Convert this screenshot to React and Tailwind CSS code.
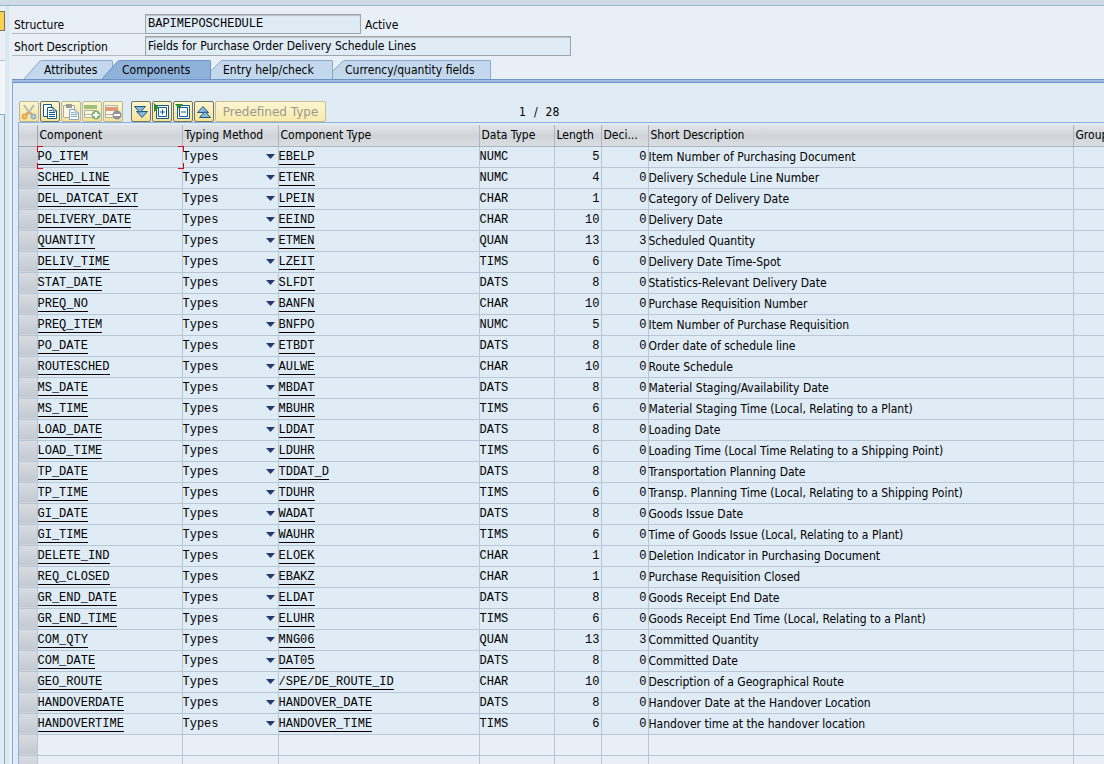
import React from 'react';

const ROWS = `PO_ITEM|EBELP|NUMC|5|0|Item Number of Purchasing Document
SCHED_LINE|ETENR|NUMC|4|0|Delivery Schedule Line Number
DEL_DATCAT_EXT|LPEIN|CHAR|1|0|Category of Delivery Date
DELIVERY_DATE|EEIND|CHAR|10|0|Delivery Date
QUANTITY|ETMEN|QUAN|13|3|Scheduled Quantity
DELIV_TIME|LZEIT|TIMS|6|0|Delivery Date Time-Spot
STAT_DATE|SLFDT|DATS|8|0|Statistics-Relevant Delivery Date
PREQ_NO|BANFN|CHAR|10|0|Purchase Requisition Number
PREQ_ITEM|BNFPO|NUMC|5|0|Item Number of Purchase Requisition
PO_DATE|ETBDT|DATS|8|0|Order date of schedule line
ROUTESCHED|AULWE|CHAR|10|0|Route Schedule
MS_DATE|MBDAT|DATS|8|0|Material Staging/Availability Date
MS_TIME|MBUHR|TIMS|6|0|Material Staging Time (Local, Relating to a Plant)
LOAD_DATE|LDDAT|DATS|8|0|Loading Date
LOAD_TIME|LDUHR|TIMS|6|0|Loading Time (Local Time Relating to a Shipping Point)
TP_DATE|TDDAT_D|DATS|8|0|Transportation Planning Date
TP_TIME|TDUHR|TIMS|6|0|Transp. Planning Time (Local, Relating to a Shipping Point)
GI_DATE|WADAT|DATS|8|0|Goods Issue Date
GI_TIME|WAUHR|TIMS|6|0|Time of Goods Issue (Local, Relating to a Plant)
DELETE_IND|ELOEK|CHAR|1|0|Deletion Indicator in Purchasing Document
REQ_CLOSED|EBAKZ|CHAR|1|0|Purchase Requisition Closed
GR_END_DATE|ELDAT|DATS|8|0|Goods Receipt End Date
GR_END_TIME|ELUHR|TIMS|6|0|Goods Receipt End Time (Local, Relating to a Plant)
COM_QTY|MNG06|QUAN|13|3|Committed Quantity
COM_DATE|DAT05|DATS|8|0|Committed Date
GEO_ROUTE|/SPE/DE_ROUTE_ID|CHAR|10|0|Description of a Geographical Route
HANDOVERDATE|HANDOVER_DATE|DATS|8|0|Handover Date at the Handover Location
HANDOVERTIME|HANDOVER_TIME|TIMS|6|0|Handover time at the handover location`
  .split('\n')
  .map((line) => line.split('|'));

const MONO = "font-['Liberation_Mono',monospace]";
const HEADERS = ['Component', 'Typing Method', 'Component Type', 'Data Type', 'Length', 'Deci...', 'Short Description', 'Group'];

function Tab({ label, active, first, width }) {
  const fill = active ? '#8fb2da' : '#c3d8ec';
  const edge = active ? '#6a94c4' : '#8aa9c8';
  const wide = first || active;
  return (
    <button type="button" role="tab" aria-selected={!!active} className={`relative flex h-[19px] items-center whitespace-nowrap ${wide ? 'pl-5' : 'pl-3'} ${width} ${active ? 'z-10' : ''}`}>
      <span className="absolute inset-0 flex" aria-hidden="true">
        <svg width="18" height="19" viewBox="0 0 18 19" className="shrink-0">
          {wide ? (
            <>
              <path d="M0 19L15 2Q16 .5 18 .5V19Z" fill={fill} />
              <path d="M0 19L15 2Q16 .5 18 .5" fill="none" stroke={edge} />
            </>
          ) : (
            <>
              <path d="M0 19V11L9 2Q10 .5 12 .5H18V19Z" fill={fill} />
              <path d="M0 11L9 2Q10 .5 12 .5H18" fill="none" stroke={edge} />
            </>
          )}
        </svg>
        <span className={`grow rounded-tr-[2px] border-t border-r ${active ? 'border-[#6a94c4] bg-[#8fb2da]' : 'border-[#8aa9c8] bg-[#c3d8ec]'}`} />
      </span>
      <span className="relative">{label}</span>
    </button>
  );
}

function ToolButton({ label, dim, children }) {
  return (
    <button type="button" aria-label={label} disabled={dim} className={`flex h-[21px] w-5 items-center justify-center rounded-[2px] border bg-linear-to-b from-[#fdf6cf] to-[#f7e395] ${dim ? 'border-[#b9b59a]' : 'border-[#77735c]'}`}>
      <svg width="18" height="18" viewBox="0 0 18 18" fill="none">{children}</svg>
    </button>
  );
}

const Arrow = () => (
  <svg width="9" height="5" viewBox="0 0 9 5" aria-hidden="true"><path d="M0 0H9L4.5 5Z" fill="#25396f" /></svg>
);

export default function App() {
  return (
    <div className="flex h-screen flex-col overflow-hidden bg-[#e8eff7] font-['DejaVu_Sans_Condensed','Noto_Sans',sans-serif] text-[12px] leading-4 text-black">
      <div className="h-[6px] shrink-0 border-b border-[#9fb5cc] bg-[#cfdce8]" />
      <div className="flex min-h-0 grow">
        <div className="flex w-[9px] shrink-0 border-r-4 border-[#dce7ef]">
          <div className="flex w-[5px] flex-col">
            <div className="mt-[5px] h-5 border border-l-0 border-[#77735c] bg-[#fbd04e]" />
            <div className="mt-[29px] h-[54px] border-t border-[#b4c4d4] bg-[#f2f6fb]" />
            <div className="grow border-t border-r border-[#8fa9c4] bg-[#dfebf5]" />
          </div>
        </div>
        <main className="flex min-w-0 grow flex-col pl-[3px]">
          <div className="mt-2 flex h-5 items-center">
            <label htmlFor="structure" className="h-5 w-[133px] border-b border-[#b3b8bd] pt-[3px] pl-0.5">Structure</label>
            <input id="structure" readOnly value="BAPIMEPOSCHEDULE" className={`h-5 w-[216px] border border-[#a0a5aa] bg-[#dfebf5] px-0.5 inset-shadow-[0_1px_1px_#b8c0c8] ${MONO}`} />
            <span className="pt-0.5 pl-1">Active</span>
          </div>
          <div className="mt-0.5 flex h-5 items-center">
            <label htmlFor="description" className="h-5 w-[133px] border-b border-[#b3b8bd] pt-[3px] pl-0.5">Short Description</label>
            <input id="description" readOnly value="Fields for Purchase Order Delivery Schedule Lines" className="h-5 w-[426px] border border-[#a0a5aa] bg-[#dfebf5] px-0.5 inset-shadow-[0_1px_1px_#b8c0c8]" />
          </div>
          <div role="tablist" className="mt-1 flex pl-3">
            <Tab label="Attributes" first width="w-[89px]" />
            <Tab label="Components" active width="-ml-[11px] w-[109px]" />
            <Tab label="Entry help/check" width="w-[122px]" />
            <Tab label="Currency/quantity fields" width="w-[158px]" />
          </div>
          <div className="h-1 shrink-0 border-y border-[#6a94c4] bg-[#9dbde0]" />
          <section className="flex min-h-0 grow flex-col border-l border-[#86a9d0] bg-[#dfebf5] pl-[5px]">
            <div className="mt-[18px] flex h-[21px] shrink-0 items-center">
              <div className="flex gap-px pl-px">
                <ToolButton label="Cut" dim>
                  <path d="M4 2L11 12M14 2L7 12" stroke="#b3bcc2" strokeWidth="2" />
                  <path d="M10 9L12 12M8 9L6 12" stroke="#d9a655" strokeWidth="2" />
                  <circle cx="4.5" cy="13.5" r="2" stroke="#dfa850" strokeWidth="2" /><circle cx="13.5" cy="13.500" r="2" stroke="#8fb2c9" strokeWidth="2" />
                </ToolButton>
                <ToolButton label="Copy">
                  <path d="M2.5 1.500H10.500V13.500H2.500Z" fill="#fff" stroke="#145b8c" />
                  <path d="M6.500 4.500H12L15.500 8V15.500H6.500Z" fill="#fff" stroke="#145b8c" />
                  <path d="M12 4.500V8H15.500M8 7.500H11M8 9.500H14M8 11.500H14M8 13.500H14" stroke="#145b8c" />
                </ToolButton>
                <ToolButton label="Paste" dim>
                  <path d="M1.500 2.500H12.500V14.500H1.500Z" fill="#f9f6e2" stroke="#aaaaa0" /><path d="M4 1H10V5H4Z" fill="#999b99" />
                  <path d="M7.500 6.500H13L16.500 10V16.500H7.500Z" fill="#fff" stroke="#7fa8c2" /><path d="M13 6.500V10H16.500M9 9.500H12M9 11.500H15M9 13.500H15" stroke="#7fa8c2" />
                </ToolButton>
                <ToolButton label="Insert row" dim>
                  <path d="M1.500 7.500H13.500V14.500H1.500ZM1.500 11.500H13.500" fill="#fbf8e4" stroke="#b0b0a4" />
                  <path d="M1 2H14V6H1Z" fill="#9dc07d" /><circle cx="13" cy="12" r="4.500" fill="#82b276" /><path d="M10 12H16M13 9V15" stroke="#fff" strokeWidth="2" />
                </ToolButton>
                <ToolButton label="Delete row" dim>
                  <path d="M1.500 2.500H13.500V14.500H1.500ZM1.500 11.500H13.500" fill="#fbf8e4" stroke="#b0b0a4" />
                  <path d="M1 4H14V8H1Z" fill="#dd9a7a" /><circle cx="13" cy="12" r="4.500" fill="#929296" /><path d="M10 12H16" stroke="#fff" strokeWidth="2" />
                </ToolButton>
              </div>
              <div className="ml-2 flex gap-px">
                <ToolButton label="Expand all">
                  <path d="M4.500 8.500H15.500L10 14.500Z" fill="#8db8dc" stroke="#145b8c" /><path d="M2.500 3.500H13.500L8 9.500Z" fill="#8db8dc" stroke="#145b8c" />
                </ToolButton>
                <ToolButton label="Expand node">
                  <path d="M3.500 2.500H15.500V15.500H3.500Z" fill="#fff" stroke="#145b8c" /><path d="M5.500 4.500H13.500V13.500H5.500ZM7 9H12M9.500 6.500V11.500" stroke="#145b8c" /><path d="M1 0V9L6 4.500Z" fill="#278c2d" />
                </ToolButton>
                <ToolButton label="Collapse node">
                  <path d="M3.500 2.500H15.500V15.500H3.500Z" fill="#fff" stroke="#145b8c" /><path d="M5.500 4.500H13.500V13.500H5.500ZM7 9H12" stroke="#145b8c" /><path d="M1 1H9L5 6Z" fill="#278c2d" />
                </ToolButton>
                <ToolButton label="Collapse all">
                  <path d="M2.500 9.500H13.500L8 3.500Z" fill="#8db8dc" stroke="#145b8c" /><path d="M4.500 14.500H15.500L10 8.500Z" fill="#8db8dc" stroke="#145b8c" />
                </ToolButton>
              </div>
              <button type="button" disabled className="ml-px h-[21px] w-[111px] rounded-[2px] border border-[#c9bf8b] bg-linear-to-b from-[#fbf6d2] to-[#f8ebac] font-['DejaVu_Sans',sans-serif] text-[#9a9a8c]">Predefined Type</button>
              <span className="ml-[193px] flex gap-2"><span>1</span><span>/</span><span>28</span></span>
            </div>
            <div className="border-t border-l border-[#8fb0d4] pt-0.5">
              <table className="w-full table-fixed border-collapse">
                <colgroup>
                  <col className="w-[18px]" /><col className="w-[145px]" /><col className="w-[96px]" /><col className="w-[201px]" /><col className="w-[75px]" /><col className="w-[47px]" /><col className="w-[47px]" /><col className="w-[425px]" /><col />
                </colgroup>
                <thead>
                  <tr className="h-[21px] bg-linear-to-b from-[#e2e4e7] via-[#d0d4d9] to-[#dadde0]">
                    <th className="border-r border-b border-[#9aa8b6] p-0" aria-label="Select" />
                    {HEADERS.map((h) => (
                      <th key={h} scope="col" className="border-r border-b border-[#aab5c0] p-0 pl-0.5 text-left font-normal whitespace-nowrap last:border-r-0">{h}</th>
                    ))}
                  </tr>
                </thead>
                <tbody>
                  {ROWS.map(([name, type, data, len, dec, text], i) => (
                    <tr key={name} className="h-[21px] [&>td]:border-r [&>td]:border-b [&>td]:border-[#b9c6d4] [&>td]:p-0 [&>td]:whitespace-nowrap [&>td:last-child]:border-r-0">
                      <td className="bg-linear-to-b from-[#d9dde2] to-[#c3c9d1]" />
                      <td className={`relative ${MONO}`}>
                        {i === 0 && (
                          <svg className="pointer-events-none absolute -top-px -left-px h-[23px] w-[147px]" viewBox="0 0 147 23" aria-hidden="true"><path d="M.5 6V.5H6M141 .5H146.500V6M146.500 17V22.500H141M6 22.500H.5V17" fill="none" stroke="#e00010" strokeWidth="1" shapeRendering="crispEdges" /></svg>
                        )}
                        <a href="#component" className="inline-block border-b border-black leading-[14px]">{name}</a>
                      </td>
                      <td className={MONO}>
                        <button type="button" className="flex w-full items-center justify-between pr-[3px]">Types<Arrow /></button>
                      </td>
                      <td className={MONO}><a href="#type" className="inline-block border-b border-black leading-[14px]">{type}</a></td>
                      <td className={MONO}>{data}</td>
                      <td className={`text-right ${MONO}`}><span className="pr-px">{len}</span></td>
                      <td className={`text-right ${MONO}`}><span className="pr-px">{dec}</span></td>
                      <td>{text}</td>
                      <td />
                    </tr>
                  ))}
                  {[0, 1].map((i) => (
                    <tr key={i} className="h-[21px] bg-[#e8eff7] [&>td]:border-r [&>td]:border-b [&>td]:border-[#b9c6d4] [&>td:last-child]:border-r-0">
                      <td className="bg-linear-to-b from-[#d9dde2] to-[#c3c9d1]" />
                      {HEADERS.map((h) => <td key={h} />)}
                    </tr>
                  ))}
                </tbody>
              </table>
            </div>
          </section>
        </main>
      </div>
    </div>
  );
}
